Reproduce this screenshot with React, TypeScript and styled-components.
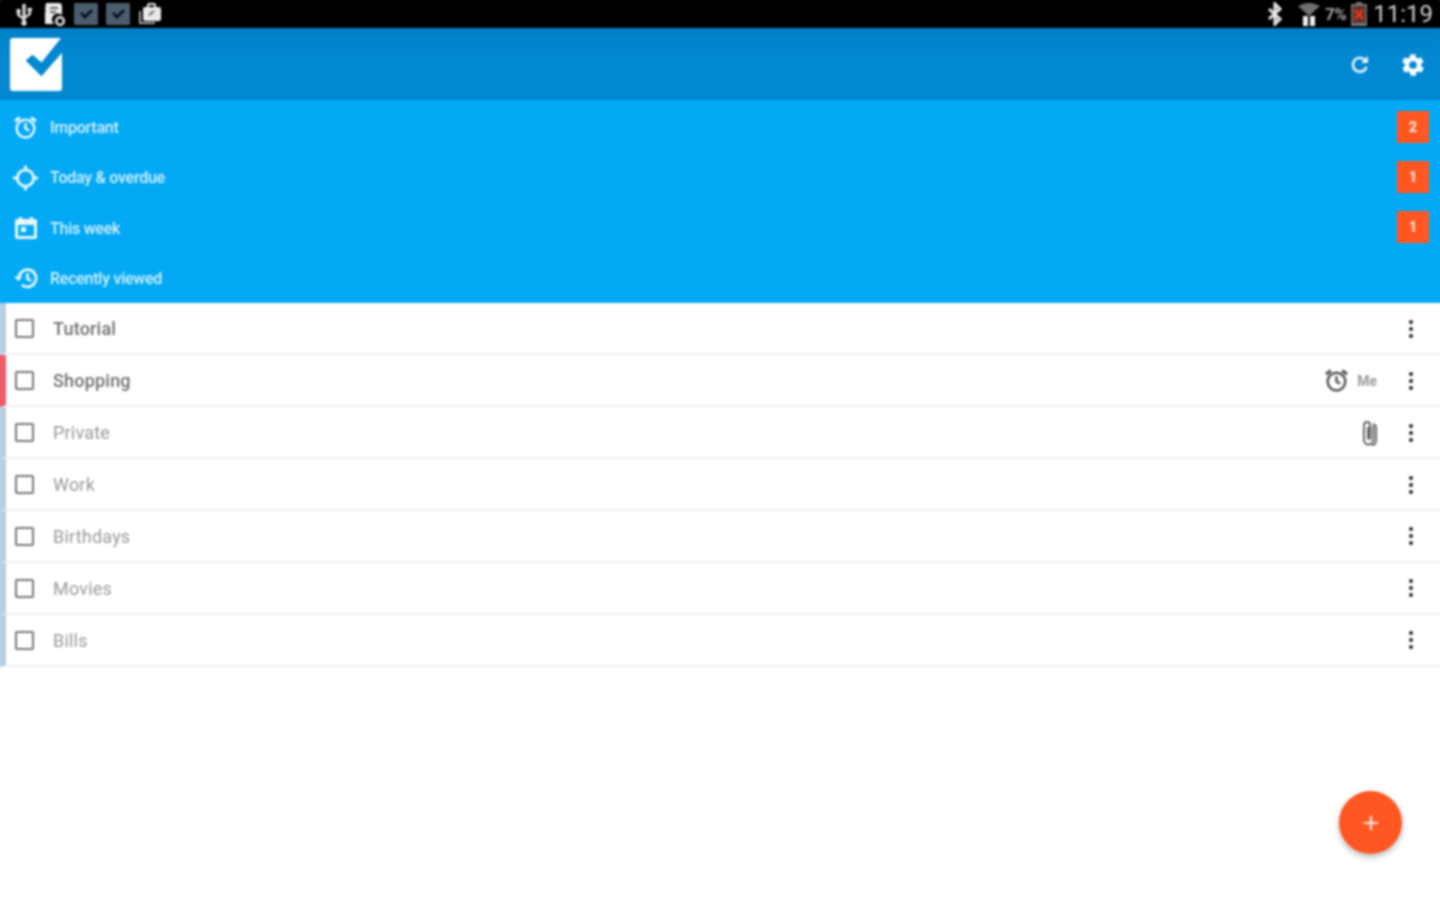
import {ReactNode} from "react";
import styled, {createGlobalStyle} from "styled-components";

const GlobalStyle = createGlobalStyle`
  html, body {
    margin: 0;
    padding: 0;
    background: #ffffff;
    overflow: hidden;
  }
  body {
    font-family: Roboto, "Liberation Sans", sans-serif;
  }
`;

const Viewport = styled.div`
  width: 1440px;
  height: 900px;
  overflow: hidden;
`;

// the source shot is a soft upscale, so everything gets a slight blur
const Screen = styled.div`
  width: 1440px;
  height: 900px;
  position: relative;
  filter: blur(1px);
`;

const StatusBar = styled.div`
  height: 28px;
  background: #000;
  box-shadow: 0 -4px 0 #000, -4px 0 0 #000, 4px 0 0 #000;
  display: flex;
  align-items: center;
  justify-content: space-between;
  padding: 0 7px 0 14px;
`;

const StatusGroup = styled.div<{$gap: number}>`
  display: flex;
  align-items: center;
  gap: ${p => p.$gap}px;
`;

const BluetoothSlot = styled.span`
  display: flex;
  margin-right: 10px;
`;

const StatusPercent = styled.span`
  font-size: 17px;
  font-weight: 700;
  color: #a2a2a2;
  letter-spacing: -0.5px;
`;

const StatusTime = styled.span`
  font-size: 24px;
  color: #d0d0d0;
  line-height: 28px;
  margin-left: 1px;
`;

const Header = styled.header`
  height: 72px;
  box-sizing: border-box;
  background: linear-gradient(#0280c6, #0288d1 40%, #0288d1);
  box-shadow: -4px 0 0 #0288d1, 4px 0 0 #0288d1;
  display: flex;
  align-items: center;
  justify-content: space-between;
  padding: 1px 14px 0 10px;
`;

const HeaderActions = styled.div`
  display: flex;
  align-items: center;
  gap: 29px;
`;

const FilterPanel = styled.nav`
  background: #03a9f4;
  box-shadow: -4px 0 0 #03a9f4, 4px 0 0 #03a9f4;
  display: flex;
  flex-direction: column;
  padding-top: 2.4px;
`;

const FilterRow = styled.div`
  height: 50.25px;
  display: flex;
  align-items: center;
  padding: 0 11px 0 13px;
`;

const FilterIconSlot = styled.span`
  width: 25px;
  display: flex;
  justify-content: center;
  flex: none;
`;

const FilterLabel = styled.span`
  margin-left: 12px;
  font-size: 16px;
  font-weight: 500;
  color: #d4f1fe;
  letter-spacing: -0.25px;
  flex: 1;
`;

const CountBadge = styled.span`
  width: 32px;
  height: 32px;
  margin-top: -2px;
  background: #ff5722;
  color: #fff0ea;
  font-size: 14px;
  font-weight: 700;
  display: flex;
  align-items: center;
  justify-content: center;
`;

const TaskList = styled.ul`
  list-style: none;
  margin: 0;
  padding: 0;
`;

const TaskRow = styled.li<{$accent: string}>`
  height: 51.9px;
  box-sizing: border-box;
  display: flex;
  align-items: center;
  border-left: 6px solid ${p => p.$accent};
  border-bottom: 2px solid #f0f0f0;
  box-shadow: -4px 0 0 ${p => p.$accent};
  padding: 1px 27px 0 9px;
`;

const Checkbox = styled.span`
  width: 15px;
  height: 15px;
  border: 2px solid #777;
  border-radius: 2px;
  flex: none;
`;

const TaskTitle = styled.span<{$dim: boolean}>`
  margin-left: 19px;
  font-size: 18px;
  letter-spacing: 0.2px;
  font-weight: ${p => (p.$dim ? 400 : 500)};
  color: ${p => (p.$dim ? "#999" : "#707070")};
  flex: 1;
`;

const TaskMeta = styled.span<{$end: number}>`
  display: flex;
  align-items: center;
  gap: 8px;
  margin-right: ${p => p.$end}px;
`;

const Assignee = styled.span`
  font-size: 14px;
  font-weight: 700;
  color: #999;
`;

const MoreDots = styled.span`
  width: 4px;
  height: 18px;
  display: flex;
  flex-direction: column;
  justify-content: space-between;
`;

const Dot = styled.span`
  width: 4px;
  height: 4px;
  border-radius: 50%;
  background: #222;
`;

const Fab = styled.button`
  position: absolute;
  left: 1339px;
  top: 791px;
  width: 63px;
  height: 63px;
  border: 0;
  padding: 0;
  border-radius: 50%;
  background: #ff5722;
  box-shadow: 0 3px 6px rgba(0, 0, 0, 0.28);
  display: flex;
  align-items: center;
  justify-content: center;
`;

const UsbIcon = () => (
  <svg width="20" height="24" viewBox="0 0 20 24" fill="#e4e4e4">
    <path d="M10 1l2.500 3.500H11.500V14l3-2.500V9h-1V6h4.500v3h-1v3.400L11.500 16.500V19a2.600 2.600 0 1 1-3 0v-1.500L3 13.600V10.600A2.200 2.200 0 1 1 6 10.600v2l2.500 2.400V4.500H7.500z" />
  </svg>
);

const SimIcon = () => (
  <svg width="24" height="24" viewBox="0 0 24 24">
    <path fill="#ececec" d="M4 1h14l2 2v10a6 6 0 0 0-8 9H3V10l1-1-1-1z" />
    <path fill="#666" d="M8 5h8v2H8zM8 9h6v2H8z" />
    <circle cx="18" cy="19" r="3.800" fill="none" stroke="#e4e4e4" strokeWidth="2.500" />
  </svg>
);

const TaskNotifIcon = () => (
  <svg width="24" height="22" viewBox="0 0 24 22">
    <rect width="24" height="22" rx="1.500" fill="#4d5d70" />
    <path d="M7 10l4 4 7-7" fill="none" stroke="#06121d" strokeWidth="3" />
  </svg>
);

const MailIcon = () => (
  <svg width="24" height="22" viewBox="0 0 24 22">
    <path fill="none" stroke="#aaa" strokeWidth="2" d="M2 8v12h15" />
    <rect x="5" y="4" width="18" height="14" rx="2" fill="#e8e8e8" />
    <rect x="10" y="1" width="7" height="4" rx="1" fill="none" stroke="#e8e8e8" strokeWidth="2" />
    <path d="M11 12l5-4" stroke="#666" strokeWidth="2" />
  </svg>
);

const BluetoothIcon = () => (
  <svg width="16" height="24" viewBox="0 0 16 24" fill="none" stroke="#e8e8e8" strokeWidth="3">
    <path d="M2 7l11 10-5 5V2l5 5L2 17" />
  </svg>
);

const SignalIcon = () => (
  <svg width="22" height="26" viewBox="0 0 22 26">
    <path fill="#707070" d="M0 5q11-6 22 0L11 15z" />
    <rect x="5" y="15" width="5" height="10" fill="#f0f0f0" />
    <rect x="12" y="15" width="5" height="10" fill="#f0f0f0" />
  </svg>
);

const BatteryIcon = () => (
  <svg width="16" height="24" viewBox="0 0 16 24">
    <path fill="#777" d="M5 0h6v2h5v22H0V2h5z" />
    <rect x="1.500" y="4" width="13" height="17" fill="#5a352e" />
    <path d="M4 8l8 9M12 8l-8 9" stroke="#e2341d" strokeWidth="2.800" />
  </svg>
);

const AppLogo = () => (
  <svg width="53" height="53" viewBox="0 0 54 54">
    <path fill="#fff" d="M3 0h49L32 25l-9-8-7 6 16 16 21-24v36a3 3 0 0 1-3 3H3a3 3 0 0 1-3-3V3a3 3 0 0 1 3-3z" />
  </svg>
);

const RefreshIcon = () => (
  <svg width="22" height="22" viewBox="0 0 22 22" fill="none">
    <path d="M17.500 13a7 7 0 1 1-1.500-7" stroke="#e8f5fd" strokeWidth="2.600" />
    <path d="M19 2v7h-7z" fill="#e8f5fd" />
  </svg>
);

const GearIcon = () => (
  <svg width="26" height="26" viewBox="0 0 24 24">
    <path fill="#f8fcff" fillRule="evenodd" d="M19.400 13c0-.3.1-.6.1-1s0-.7-.1-1l2.100-1.600c.2-.2.2-.4.1-.6l-2-3.500c-.1-.2-.4-.3-.6-.2l-2.500 1c-.5-.4-1.100-.7-1.700-1l-.4-2.600c0-.3-.2-.5-.5-.5h-4c-.3 0-.5.2-.5.400l-.4 2.700c-.6.200-1.200.6-1.700 1l-2.500-1c-.2-.1-.5 0-.6.200l-2 3.500c-.1.200-.1.500.1.600L4.600 11c0 .3-.1.700-.1 1s0 .7.1 1l-2.100 1.600c-.2.200-.2.400-.1.600l2 3.500c.1.200.4.300.6.200l2.500-1c.5.400 1.100.700 1.700 1l.4 2.600c0 .3.2.5.5.5h4c.3 0 .5-.2.5-.4l.4-2.700c.6-.2 1.200-.6 1.700-1l2.500 1c.2.100.5 0 .6-.2l2-3.500c.1-.2.100-.5-.1-.6zM12 15.500a3.500 3.500 0 1 1 0-7 3.500 3.500 0 0 1 0 7z" />
  </svg>
);

const AlarmIcon = ({color}: {color: string}) => (
  <svg width="25" height="25" viewBox="0 0 24 24" fill="none" stroke={color} strokeWidth="2.400">
    <circle cx="12" cy="13" r="8.500" />
    <path d="M12 8v5l3.500 2" />
    <path d="M2 6l4.500-3.500M22 6l-4.500-3.500" strokeWidth="3" />
  </svg>
);

const TargetIcon = () => (
  <svg width="26" height="26" viewBox="0 0 26 26" fill="none" stroke="#e6f7ff" strokeWidth="3">
    <circle cx="13" cy="13" r="8.500" />
    <path d="M13 0v4M13 22v4M0 13h4M22 13h4" />
  </svg>
);

const CalendarIcon = () => (
  <svg width="24" height="24" viewBox="0 0 24 24">
    <path fill="#e6f7ff" fillRule="evenodd" d="M5 1h3v2h8V1h3v2h2a2 2 0 0 1 2 2v16a2 2 0 0 1-2 2H3a2 2 0 0 1-2-2V5a2 2 0 0 1 2-2h2zM4 9v11h16V9z" />
    <rect x="7" y="11" width="5" height="5" fill="#e6f7ff" />
  </svg>
);

const HistoryIcon = () => (
  <svg width="26" height="24" viewBox="0 0 26 24" fill="none" stroke="#e6f7ff" strokeWidth="2.800">
    <path d="M6 12a9 9 0 1 1 3 7" />
    <path d="M1 10.500h9L5.500 15z" fill="#e6f7ff" stroke="none" />
    <path d="M15 7v6l4 2" />
  </svg>
);

const ClipIcon = () => (
  <svg width="20" height="28" viewBox="0 0 20 28" fill="none" stroke="#666" strokeWidth="2">
    <path d="M14 7v14a4.500 4.500 0 0 1-9 0V6a3 3 0 0 1 6 0v13a1 1 0 0 1-2 0V8" />
    <path d="M14 5c2 .5 3 2 3 4v13c0 2-1.500 4-4 4" />
  </svg>
);

const filters: {label: string; icon: ReactNode; count: number}[] = [
  {label: "Important", icon: <AlarmIcon color="#e6f7ff" />, count: 2},
  {label: "Today & overdue", icon: <TargetIcon />, count: 1},
  {label: "This week", icon: <CalendarIcon />, count: 1},
  {label: "Recently viewed", icon: <HistoryIcon />, count: 0},
];

const tasks = [
  {title: "Tutorial", accent: "#b8cfe4", dim: false},
  {title: "Shopping", accent: "#ef5a6a", dim: false, due: true},
  {title: "Private", accent: "#b8cfe4", dim: true, attachment: true},
  {title: "Work", accent: "#b8cfe4", dim: true},
  {title: "Birthdays", accent: "#b8cfe4", dim: true},
  {title: "Movies", accent: "#b8cfe4", dim: true},
  {title: "Bills", accent: "#b8cfe4", dim: true},
];

export default function App() {
  return (
    <Viewport>
      <GlobalStyle />
      <Screen>
        <StatusBar>
          <StatusGroup $gap={8}>
            <UsbIcon />
            <SimIcon />
            <TaskNotifIcon />
            <TaskNotifIcon />
            <MailIcon />
          </StatusGroup>
          <StatusGroup $gap={5}>
            <BluetoothSlot>
              <BluetoothIcon />
            </BluetoothSlot>
            <SignalIcon />
            <StatusPercent>7%</StatusPercent>
            <BatteryIcon />
            <StatusTime>11:19</StatusTime>
          </StatusGroup>
        </StatusBar>
        <Header>
          <AppLogo />
          <HeaderActions>
            <RefreshIcon />
            <GearIcon />
          </HeaderActions>
        </Header>
        <FilterPanel>
          {filters.map(filter => (
            <FilterRow key={filter.label}>
              <FilterIconSlot>{filter.icon}</FilterIconSlot>
              <FilterLabel>{filter.label}</FilterLabel>
              {filter.count > 0 && <CountBadge>{filter.count}</CountBadge>}
            </FilterRow>
          ))}
        </FilterPanel>
        <TaskList>
          {tasks.map(task => (
            <TaskRow key={task.title} $accent={task.accent}>
              <Checkbox />
              <TaskTitle $dim={task.dim}>{task.title}</TaskTitle>
              {task.due && (
                <TaskMeta $end={32}>
                  <AlarmIcon color="#555" />
                  <Assignee>Me</Assignee>
                </TaskMeta>
              )}
              {task.attachment && (
                <TaskMeta $end={30}>
                  <ClipIcon />
                </TaskMeta>
              )}
              <MoreDots>
                <Dot />
                <Dot />
                <Dot />
              </MoreDots>
            </TaskRow>
          ))}
        </TaskList>
        <Fab aria-label="Add task">
          <svg width="18" height="18" viewBox="0 0 20 20">
            <path d="M8.800 2h2.400v6.800H18v2.400h-6.800V18H8.800v-6.800H2V8.800h6.800z" fill="#ffe9e0" />
          </svg>
        </Fab>
      </Screen>
    </Viewport>
  );
}
